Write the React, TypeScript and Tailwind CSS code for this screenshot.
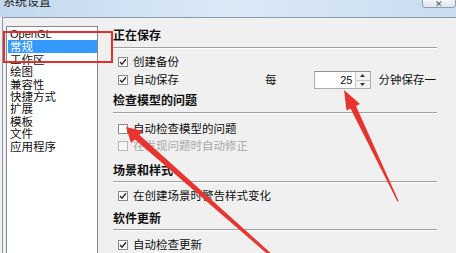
import React from "react";

const cjk = { fontFamily: '"Noto Sans CJK SC", "Noto Sans", sans-serif' };

function Check({ checked, disabled }: { checked?: boolean; disabled?: boolean }) {
  return (
    <div
      className={
        "w-[10px] h-[10px] shrink-0 border flex items-center justify-center " +
        (disabled ? "border-[#b8b8b8] bg-[#f4f4f4]" : "border-[#8a8a8a] bg-white")
      }
    >
      {checked && (
        <svg width="8" height="8" viewBox="0 0 8 8">
          <path d="M1 4 L3 6.2 L7 1.2" fill="none" stroke="#2a2a2a" strokeWidth="1.4" />
        </svg>
      )}
    </div>
  );
}

function Heading({ text, mt }: { text: string; mt: string }) {
  return (
    <div className={"h-[14px] flex items-center text-[12px] font-bold text-[#111] " + mt}>
      {text}
    </div>
  );
}

function Sep({ mt }: { mt: string }) {
  return (
    <div className={"w-[324px] " + mt}>
      <div className="h-[1px] bg-[#a0a0a0]" />
      <div className="h-[1px] bg-white" />
    </div>
  );
}

function Row({
  text,
  checked,
  disabled,
  mt,
}: {
  text: string;
  checked?: boolean;
  disabled?: boolean;
  mt: string;
}) {
  return (
    <div className={"h-[16px] flex items-center pl-[5px] gap-[5px] " + mt}>
      <Check checked={checked} disabled={disabled} />
      <span className={"text-[11.5px] " + (disabled ? "text-[#a8a8a8]" : "text-[#111]")}>{text}</span>
    </div>
  );
}

export default function App() {
  const items = ["OpenGL", "常规", "工作区", "绘图", "兼容性", "快捷方式", "扩展", "模板", "文件", "应用程序"];
  return (
    <div className="relative w-[456px] h-[253px] overflow-hidden bg-[#f0f0f0]" style={cjk}>
      {/* title bar */}
      <div className="h-[17px] bg-gradient-to-r from-[#c3d8ee] via-[#dbe9f7] to-[#c9dcf0] flex items-start justify-between">
        <div className="ml-[3px] -mt-[6px] text-[12px] leading-[14px] text-[#222]">系统设置</div>
        <div className="w-[34px] h-[9px] -mt-[1px] border border-[#8e9cae] rounded-b-[3px] bg-gradient-to-b from-[#f2f5f9] to-[#dde4ec] flex items-end justify-center overflow-hidden">
          <span className="text-[9px] leading-[9px] text-[#555] -mb-[1px]">✕</span>
        </div>
      </div>
      {/* body */}
      <div className="ml-[2px] h-[236px] border-l border-t border-[#8b99aa] bg-[#f0f0f0] flex">
        {/* list */}
        <div className="ml-[3px] mt-[8px] w-[92px] h-[240px] bg-white border border-[#828790] pt-[1px]">
          <div className="text-[11.5px] text-[#111]">
            {items.map((it, i) => (
              <div
                key={it}
                className={
                  "ml-[1px] pl-[2px] h-[12.4px] leading-[12.4px] " +
                  (i === 1 ? "bg-[#3399ff] text-white" : "")
                }
                style={i === 0 ? { fontFamily: '"Liberation Sans", sans-serif', fontSize: "11px" } : undefined}
              >
                {it}
              </div>
            ))}
          </div>
        </div>
        {/* right */}
        <div className="ml-[15px] flex flex-col">
          <Heading text="正在保存" mt="mt-[10px]" />
          <Sep mt="mt-[5px]" />
          <Row text="创建备份" checked mt="mt-[5px]" />
          <div className="h-[20px] mt-[1px] flex items-center pl-[5px]">
            <Check checked />
            <span className="ml-[5px] w-[132px] text-[11.5px] text-[#111]">自动保存</span>
            <span className="text-[11.5px] text-[#111]">每</span>
            <div className="ml-[37px] w-[57px] h-[18px] border border-[#abadb3] border-t-[#8e8f8f] bg-white flex items-center">
              <span
                className="flex-1 text-right pr-[2px] text-[11px] text-[#111]"
                style={{ fontFamily: '"Liberation Sans", sans-serif' }}
              >
                25
              </span>
              <div className="w-[15px] h-full flex flex-col border-l border-[#c8c8c8] bg-[#f3f3f3]">
                <div className="flex-1 flex items-center justify-center border-b border-[#c8c8c8]">
                  <svg width="5" height="3" viewBox="0 0 5 3">
                    <path d="M0 3 L2.5 0 L5 3 Z" fill="#333" />
                  </svg>
                </div>
                <div className="flex-1 flex items-center justify-center">
                  <svg width="5" height="3" viewBox="0 0 5 3">
                    <path d="M0 0 L2.5 3 L5 0 Z" fill="#333" />
                  </svg>
                </div>
              </div>
            </div>
            <span className="ml-[8px] text-[11.5px] text-[#111] whitespace-nowrap">分钟保存一</span>
          </div>
          <Heading text="检查模型的问题" mt="mt-[4px]" />
          <Sep mt="mt-[5px]" />
          <Row text="自动检查模型的问题" mt="mt-[7px]" />
          <Row text="在发现问题时自动修正" disabled mt="mt-[1px]" />
          <Heading text="场景和样式" mt="mt-[9px]" />
          <Sep mt="mt-[4px]" />
          <Row text="在创建场景时警告样式变化" checked mt="mt-[5px]" />
          <Heading text="软件更新" mt="mt-[7px]" />
          <Sep mt="mt-[4px]" />
          <Row text="自动检查更新" checked mt="mt-[6px]" />
        </div>
      </div>
      {/* red highlight rectangle */}
      <div className="absolute left-[3px] top-[31px] w-[110px] h-[32px] border-2 border-[#e0302c]" />
      {/* arrows */}
      <svg className="absolute left-0 top-0" width="456" height="253" viewBox="0 0 456 253">
        <polygon
          points="344,90 360,104 356,106 398.6,201 397.4,201.4 350.5,108.6 346.5,110.5"
          fill="#e8342e"
        />
        <polygon
          points="126,127 143,131 139.5,135 274,256 272,258 135,139.5 131,143"
          fill="#e8342e"
        />
      </svg>
    </div>
  );
}
